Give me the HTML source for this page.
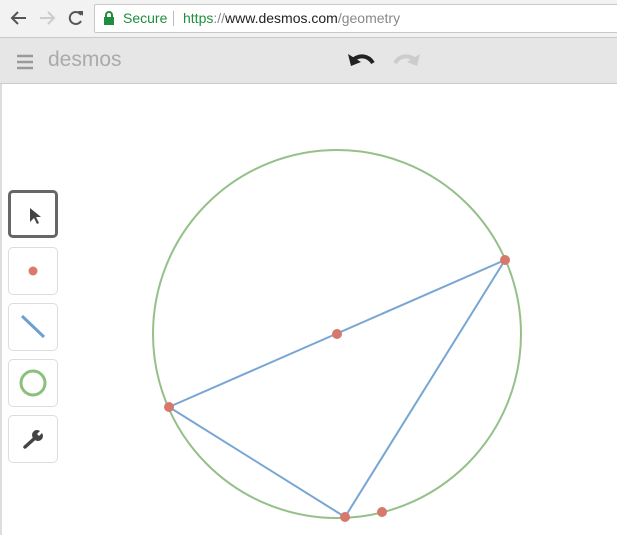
<!DOCTYPE html><html><head><style>
body{margin:0;width:617px;height:535px;overflow:hidden;background:#fff;font-family:"Liberation Sans",sans-serif;position:relative}
.chrome{position:absolute;left:0;top:0;width:617px;height:37px;background:#f2f2f2;border-bottom:1px solid #c8c8c8}
.url{position:absolute;left:94px;top:4px;width:560px;height:27px;background:#fff;border:1px solid #c8c8c8;border-radius:2px;font-size:14px;line-height:27px}
.hdr{position:absolute;left:0;top:38px;width:617px;height:45px;background:#e6e6e6;border-bottom:1px solid #ccc}
.btn{position:absolute;left:8px;width:50px;height:48px;border:1px solid #ddd;border-radius:5px;background:#fff;box-sizing:border-box}
</style></head><body>
<div class="chrome">
<svg width="94" height="37" style="position:absolute;left:0;top:0">
<path d="M26 18H13M18 12l-6 6 6 6" stroke="#555" stroke-width="2" fill="none"/>
<path d="M40 18h13M48 12l6 6-6 6" stroke="#ccc" stroke-width="2" fill="none"/>
<path d="M81 15a6 6 0 1 0 0 6" stroke="#555" stroke-width="2" fill="none"/><path d="M78 11h5v5z" fill="#555"/>
</svg>
<div class="url"><svg width="12" height="14" style="position:absolute;left:8px;top:6px"><rect x="1" y="6" width="10" height="8" fill="#1e8e3e"/><path d="M3 6V4a3 3 0 0 1 6 0v2" stroke="#1e8e3e" stroke-width="2" fill="none"/></svg>
<span style="position:absolute;left:28px;color:#1e8e3e">Secure</span>
<span style="position:absolute;left:78px;top:6px;width:1px;height:15px;background:#bbb"></span>
<span style="position:absolute;left:88px"><span style="color:#1e8e3e">https</span><span style="color:#888">://</span><span style="color:#222">www.desmos.com</span><span style="color:#888">/geometry</span></span></div>
</div>
<div class="hdr">
<svg width="20" height="16" style="position:absolute;left:16px;top:16px"><path d="M1 2h16M1 8h16M1 14h16" stroke="#999" stroke-width="2.5"/></svg>
<span style="position:absolute;left:48px;top:10px;font-size:21px;color:#aaa">desmos</span>
<svg width="30" height="24" style="position:absolute;left:346px;top:11px"><path d="M27 14C22 6 14 6 8 10" stroke="#222" stroke-width="4" fill="none"/><path d="M2 5l3 12 10-4z" fill="#222"/></svg>
<svg width="30" height="24" style="position:absolute;left:392px;top:11px"><path d="M3 14C8 6 16 6 22 10" stroke="#ccc" stroke-width="4" fill="none"/><path d="M28 5l-3 12-10-4z" fill="#ccc"/></svg>
</div>
<div style="position:absolute;left:0;top:84px;width:2px;height:451px;background:#ddd"></div>
<div class="btn" style="top:190px;border:3px solid #666"><svg width="44" height="42"><path d="M19 15v14l4-4 3 6 2-1-3-6h5z" fill="#444"/></svg></div>
<div class="btn" style="top:247px"><svg width="48" height="46"><circle cx="24" cy="23" r="4.5" fill="#d97a6e"/></svg></div>
<div class="btn" style="top:303px"><svg width="48" height="46"><path d="M13 12l22 21" stroke="#6e9fd2" stroke-width="3"/></svg></div>
<div class="btn" style="top:359px"><svg width="48" height="46"><circle cx="24" cy="23" r="12" stroke="#8dbf7c" stroke-width="3" fill="none"/></svg></div>
<div class="btn" style="top:415px"><svg width="48" height="46"><path d="M16 31l10-9" stroke="#444" stroke-width="3.5" stroke-linecap="round"/><path d="M24 22a5 5 0 0 1 7-7l-3 3 2 2 3-3a5 5 0 0 1-7 7z" fill="#444"/></svg></div>
<svg width="617" height="535" style="position:absolute;left:0;top:0">
<circle cx="337" cy="334" r="184" stroke="#95c08a" stroke-width="2" fill="none"/>
<path d="M505 260L169 407L345 517Z" stroke="#78a6d2" stroke-width="2" fill="none"/>
<g fill="#d8776c"><circle cx="505" cy="260" r="5"/><circle cx="337" cy="334" r="5"/><circle cx="169" cy="407" r="5"/><circle cx="345" cy="517" r="5"/><circle cx="382" cy="512" r="5"/></g>
</svg>
</body></html>
